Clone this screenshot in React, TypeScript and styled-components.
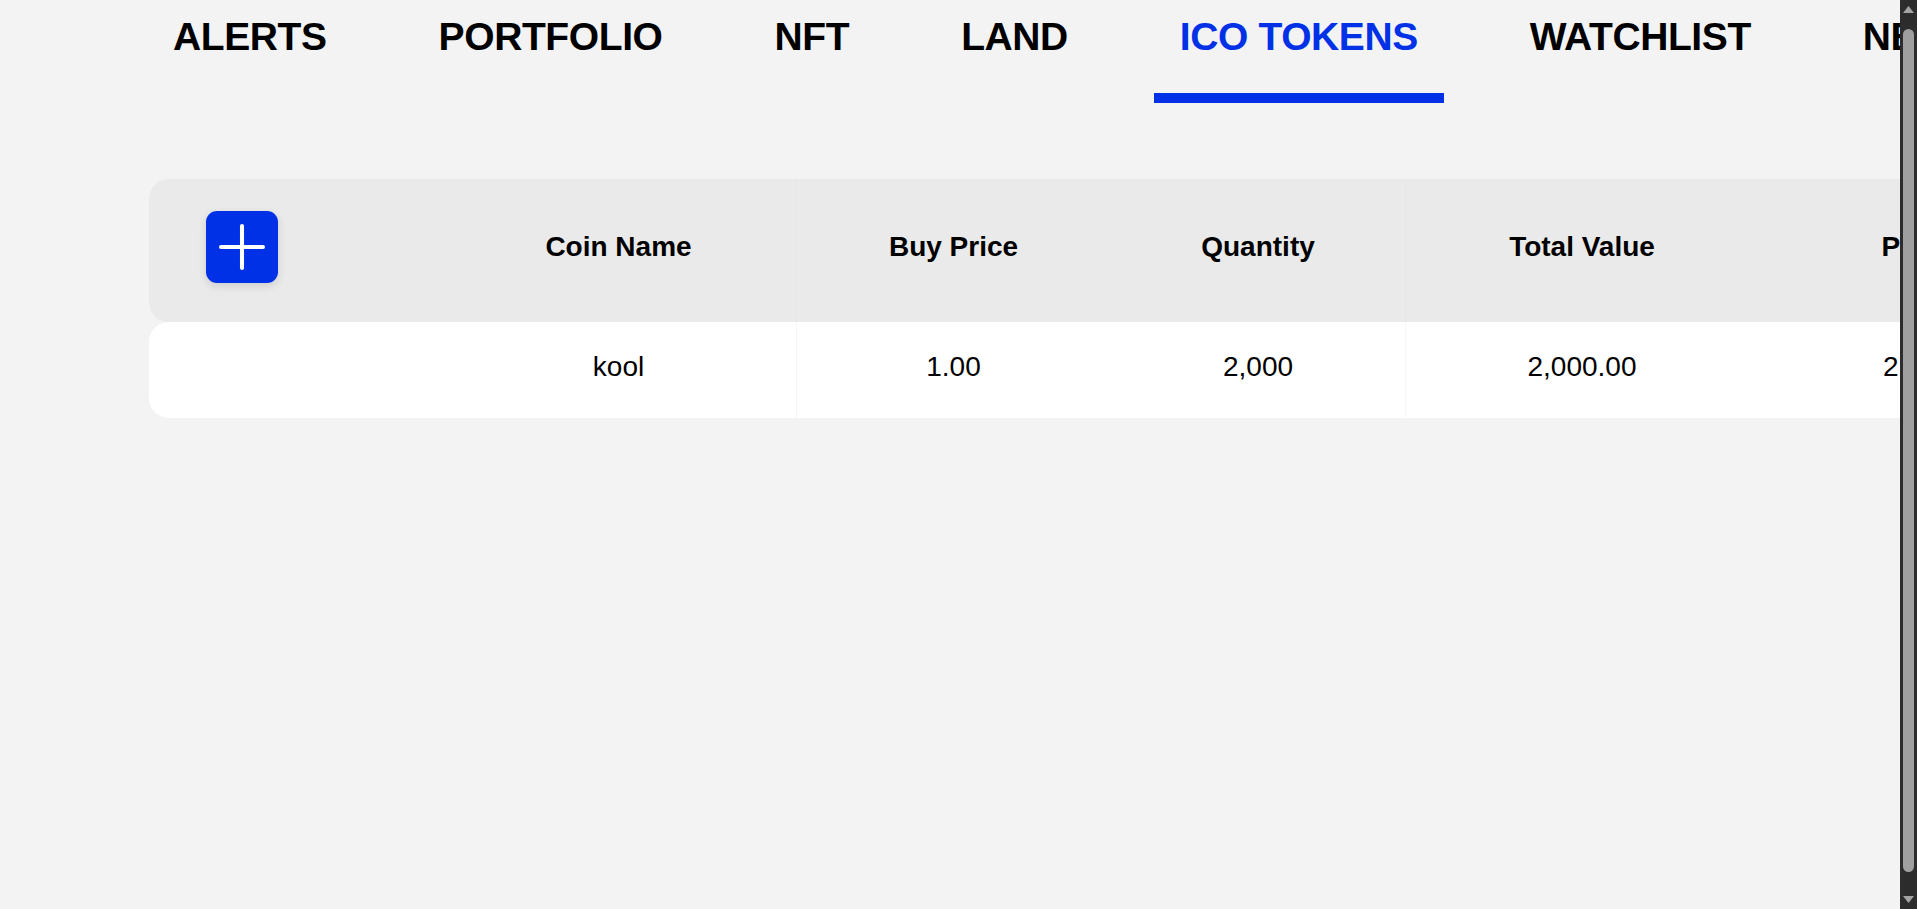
import React from "react";
import styled, { createGlobalStyle } from "styled-components";
import { Plus } from "lucide-react";

const GlobalStyle = createGlobalStyle`
  html, body {
    margin: 0;
    background: #f3f3f3;
    overflow: hidden;
  }
  body {
    color: #000;
    font-family: "Liberation Sans", Arial, sans-serif;
  }
`;

const BLUE = "#0031e6";
const COLUMNS = "291px 356px 314px 295px 353px 319px 320px 320px";

const Page = styled.div`
  display: flex;
  height: 100vh;
  background: #f3f3f3;
`;

const Main = styled.main`
  flex: 1;
  min-width: 0;
  overflow: hidden;
`;

const ScrollRail = styled.div`
  flex: 0 0 17px;
  display: flex;
  flex-direction: column;
  align-items: center;
  background: #2c2c2c;
`;

const RailArrow = styled.div`
  height: 19px;
  width: 100%;
  display: flex;
  align-items: center;
  justify-content: center;
  color: #a3a3a3;
`;

const RailThumb = styled.div`
  flex: 1;
  width: 11px;
  margin: 10px 0 18px;
  border-radius: 6px;
  background: #9f9f9f;
`;

const Tabs = styled.nav`
  display: flex;
  gap: 60px;
  padding: 15px 0 0 147px;
  white-space: nowrap;
`;

const Tab = styled.a<{ $active?: boolean }>`
  flex-shrink: 0;
  display: block;
  padding: 0 26px 34px;
  font-size: 39px;
  line-height: 44px;
  font-weight: 700;
  letter-spacing: -0.4px;
  text-transform: uppercase;
  color: ${(p) => (p.$active ? BLUE : "#000")};
  border-bottom: 10px solid ${(p) => (p.$active ? BLUE : "transparent")};
  cursor: pointer;
`;

const Table = styled.div`
  margin: 76px 0 0 149px;
  display: flex;
  flex-direction: column;
  width: max-content;
`;

const Row = styled.div<{ $head?: boolean }>`
  display: grid;
  grid-template-columns: ${COLUMNS};
  height: ${(p) => (p.$head ? 143 : 96)}px;
  background: ${(p) => (p.$head ? "#eaeaea" : "#ffffff")};
  border-radius: 20px;
`;

const Cell = styled.div<{ $head?: boolean; $divider?: boolean; $start?: boolean }>`
  display: flex;
  align-items: center;
  justify-content: ${(p) => (p.$start ? "flex-start" : "center")};
  padding-left: ${(p) => (p.$start ? "56px" : "0")};
  padding-bottom: ${(p) => (p.$head ? "8px" : "6px")};
  font-size: 28px;
  line-height: 32px;
  font-weight: ${(p) => (p.$head ? 700 : 400)};
  color: #000;
  white-space: nowrap;
  border-left: 1px solid ${(p) => (p.$divider ? (p.$head ? "#e6e6e6" : "#f6f6f6") : "transparent")};
`;

const AddButton = styled.button`
  width: 72px;
  height: 72px;
  padding: 0;
  border: none;
  border-radius: 11px;
  background: ${BLUE};
  color: #fff;
  display: flex;
  align-items: center;
  justify-content: center;
  box-shadow: 0 3px 8px rgba(0, 0, 0, 0.12);
  cursor: pointer;
`;

const tabs = ["Alerts", "Portfolio", "NFT", "Land", "ICO Tokens", "Watchlist", "News", "Settings"];

const headers = [
  { label: "Coin Name", divider: false },
  { label: "Buy Price", divider: true },
  { label: "Quantity", divider: false },
  { label: "Total Value", divider: true },
  { label: "Profit", divider: false },
  { label: "Actions", divider: false },
  { label: "", divider: false },
];

const rows = [["kool", "1.00", "2,000", "2,000.00", "2,000", "", ""]];

const Triangle = ({ down }: { down?: boolean }) => (
  <svg width="11" height="7" viewBox="0 0 11 7" aria-hidden="true">
    <polygon points={down ? "0,0 11,0 5.5,7" : "5.5,0 11,7 0,7"} fill="currentColor" />
  </svg>
);

export default function App() {
  return (
    <Page>
      <GlobalStyle />
      <Main>
        <Tabs>
          {tabs.map((t) => (
            <Tab key={t} $active={t === "ICO Tokens"}>
              {t}
            </Tab>
          ))}
        </Tabs>
        <Table>
          <Row $head>
            <Cell $head $start>
              <AddButton aria-label="Add token">
                <Plus size={72} strokeWidth={1.35} />
              </AddButton>
            </Cell>
            {headers.map((h, i) => (
              <Cell key={i} $head $divider={h.divider}>
                {h.label}
              </Cell>
            ))}
          </Row>
          {rows.map((r, ri) => (
            <Row key={ri}>
              <Cell />
              {r.map((v, i) => (
                <Cell key={i} $divider={headers[i].divider}>
                  {v}
                </Cell>
              ))}
            </Row>
          ))}
        </Table>
      </Main>
      <ScrollRail aria-hidden="true">
        <RailArrow>
          <Triangle />
        </RailArrow>
        <RailThumb />
        <RailArrow>
          <Triangle down />
        </RailArrow>
      </ScrollRail>
    </Page>
  );
}
